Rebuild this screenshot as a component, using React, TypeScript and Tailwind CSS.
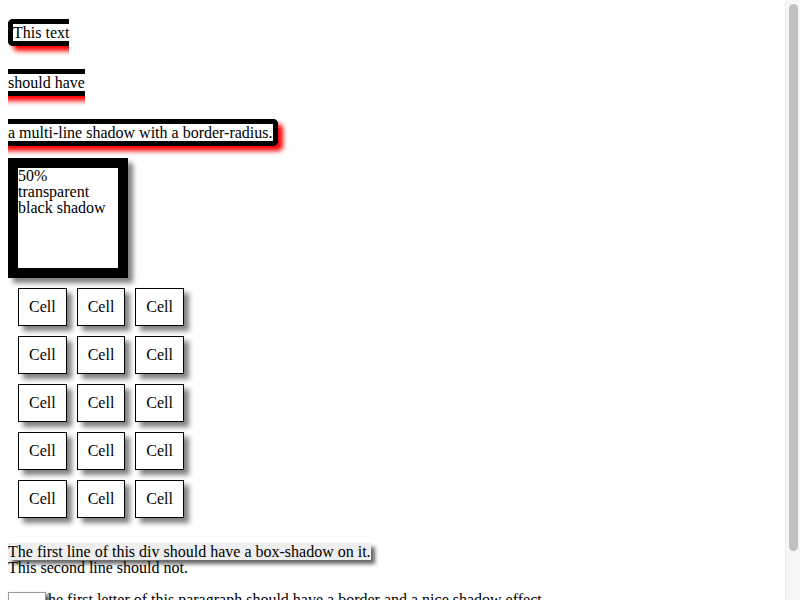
import React from 'react';

const rows = [0, 1, 2, 3, 4];
const cols = [0, 1, 2];

export default function App() {
  return (
    <div className="flex h-[600px] overflow-hidden bg-white">
      <div className="min-w-0 flex-1 p-2 font-['Liberation_Serif',serif] text-base leading-4 text-black">
        {/* inline span broken over three lines */}
        <div className="leading-[50px]">
          <span className="box-decoration-slice rounded-[5px] border-[5px] border-black shadow-[5px_5px_5px_red]">
            This text
            <br />
            should have
            <br />
            a multi-line shadow with a border-radius.
          </span>
        </div>

        <div className="box-content h-[100px] w-[100px] border-[10px] border-black shadow-[5px_5px_5px_rgba(0,0,0,0.5)]">
          50% transparent black shadow
        </div>

        <table className="border-separate border-spacing-[10px]">
          <tbody>
            {rows.map((r) => (
              <tr key={r}>
                {cols.map((c) => (
                  <td key={c} className="border border-black p-[10px] shadow-[5px_5px_5px_#808080]">
                    Cell
                  </td>
                ))}
              </tr>
            ))}
          </tbody>
        </table>

        <p className="my-4">
          <span className="bg-[#eeeeee] shadow-[4px_4px_4px_#666]">
            The first line of this div should have a box-shadow on it.
          </span>
          <br />
          This second line should not.
        </p>

        <p className="mt-4 whitespace-nowrap">
          <span className="float-left mr-[2px] w-[38px] border border-[#999] text-center text-[40px] leading-[44px] shadow-[3px_3px_4px_#444]">
            T
          </span>
          he first letter of this paragraph should have a border and a nice shadow effect.
        </p>
      </div>

      {/* page scrollbar */}
      <div className="flex w-[15px] shrink-0 flex-col border-l border-[#ececec] bg-[#f6f6f6] pt-[4px]">
        <div className="mx-auto h-[547px] w-[9px] rounded-full bg-[#c1c1c1]" />
      </div>
    </div>
  );
}
